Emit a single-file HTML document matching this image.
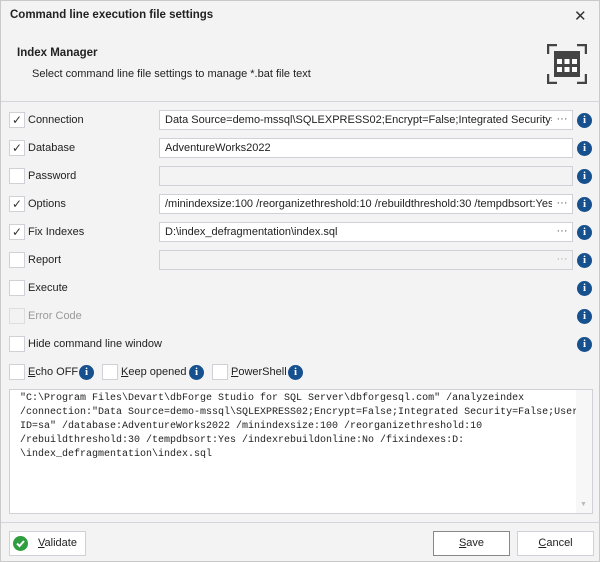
<!DOCTYPE html>
<html><head><style>
*{box-sizing:border-box;margin:0;padding:0}
body{width:600px;height:562px;background:#f3f3f3;font-family:"Liberation Sans",sans-serif;font-size:11px;color:#222;position:relative;overflow:hidden;border:1px solid #c9c9c9}
.a{position:absolute}
.title{left:9px;top:8px;font-weight:bold;font-size:11.5px}
.x{left:573px;top:6px;font-size:15px;color:#333}
.hdr{left:16px;top:46px;font-weight:bold;font-size:11.5px}
.sub{left:31px;top:67px;font-size:11px}
.sep{left:0;width:600px;height:1px;background:#d4d4dc}
.cb{width:16px;height:16px;border:1px solid #cfd0d8;background:#fff;font-size:12px;line-height:14px;text-align:center;color:#333}
.lbl{font-size:11px}
.inp{left:158px;width:414px;height:20px;border:1px solid #cfd0d8;background:#fff;padding:3px 5px;font-size:11px;white-space:nowrap;overflow:hidden}
.inp.dis{background:#f3f3f3}
.dots{position:absolute;right:0;top:0;height:18px;width:20px;text-align:center;color:#555;font-size:11px;line-height:16px;background:#fff}
.dis .dots{background:#f3f3f3;color:#aaa}
.info{width:15px;height:15px;border-radius:50%;background:#17508f;color:#fff;font-weight:bold;font-size:11px;line-height:15px;text-align:center;font-family:"Liberation Serif",serif}
.ta{left:8px;top:388px;width:584px;height:125px;border:1px solid #cfd0d8;background:#fff;font-family:"Liberation Mono",monospace;font-size:10px;line-height:14px;padding:2px 0 0 10px;white-space:pre;overflow:hidden}
.btn{height:25px;border:1px solid #cfd0d8;background:#fff;text-align:center;line-height:23px;font-size:11px}
u{text-decoration:underline}
</style></head><body>
<div class="a title">Command line execution file settings</div>
<div class="a x">✕</div>
<div class="a hdr">Index Manager</div>
<div class="a sub">Select command line file settings to manage *.bat file text</div>
<svg class="a" style="left:546px;top:43px" width="40" height="40" viewBox="0 0 40 40">
<path d="M1 10V1h9M30 1h9v9M39 30v9h-9M10 39H1v-9" stroke="#444" stroke-width="2.5" fill="none"/>
<rect x="7" y="7" width="26" height="26" fill="#444"/>
<g fill="#fff"><rect x="10" y="15" width="5" height="5"/><rect x="17.5" y="15" width="5" height="5"/><rect x="25" y="15" width="5" height="5"/><rect x="10" y="23" width="5" height="5"/><rect x="17.5" y="23" width="5" height="5"/><rect x="25" y="23" width="5" height="5"/></g>
</svg>
<div class="a sep" style="top:100px"></div>

<div class="a cb" style="left:8px;top:111px">✓</div><div class="a lbl" style="left:27px;top:113px">Connection</div>
<div class="a inp" style="top:109px">Data Source=demo-mssql\SQLEXPRESS02;Encrypt=False;Integrated Security=F<span class="dots">···</span></div>
<div class="a info" style="left:576px;top:112px">i</div>

<div class="a cb" style="left:8px;top:139px">✓</div><div class="a lbl" style="left:27px;top:141px">Database</div>
<div class="a inp" style="top:137px">AdventureWorks2022</div>
<div class="a info" style="left:576px;top:140px">i</div>

<div class="a cb" style="left:8px;top:167px"></div><div class="a lbl" style="left:27px;top:169px">Password</div>
<div class="a inp dis" style="top:165px"></div>
<div class="a info" style="left:576px;top:168px">i</div>

<div class="a cb" style="left:8px;top:195px">✓</div><div class="a lbl" style="left:27px;top:197px">Options</div>
<div class="a inp" style="top:193px">/minindexsize:100 /reorganizethreshold:10 /rebuildthreshold:30 /tempdbsort:Yes<span class="dots">···</span></div>
<div class="a info" style="left:576px;top:196px">i</div>

<div class="a cb" style="left:8px;top:223px">✓</div><div class="a lbl" style="left:27px;top:225px">Fix Indexes</div>
<div class="a inp" style="top:221px">D:\index_defragmentation\index.sql<span class="dots">···</span></div>
<div class="a info" style="left:576px;top:224px">i</div>

<div class="a cb" style="left:8px;top:251px"></div><div class="a lbl" style="left:27px;top:253px">Report</div>
<div class="a inp dis" style="top:249px"><span class="dots">···</span></div>
<div class="a info" style="left:576px;top:252px">i</div>

<div class="a cb" style="left:8px;top:279px"></div><div class="a lbl" style="left:27px;top:281px">Execute</div>
<div class="a info" style="left:576px;top:280px">i</div>

<div class="a cb" style="left:8px;top:307px;background:#f3f3f3;border-color:#ddd"></div><div class="a lbl" style="left:27px;top:309px;color:#999">Error Code</div>
<div class="a info" style="left:576px;top:308px">i</div>

<div class="a cb" style="left:8px;top:335px"></div><div class="a lbl" style="left:27px;top:337px">Hide command line window</div>
<div class="a info" style="left:576px;top:336px">i</div>

<div class="a cb" style="left:8px;top:363px"></div><div class="a lbl" style="left:27px;top:365px"><u>E</u>cho OFF</div>
<div class="a info" style="left:78px;top:364px">i</div>
<div class="a cb" style="left:101px;top:363px"></div><div class="a lbl" style="left:120px;top:365px"><u>K</u>eep opened</div>
<div class="a info" style="left:188px;top:364px">i</div>
<div class="a cb" style="left:211px;top:363px"></div><div class="a lbl" style="left:230px;top:365px"><u>P</u>owerShell</div>
<div class="a info" style="left:287px;top:364px">i</div>

<div class="a ta">"C:\Program Files\Devart\dbForge Studio for SQL Server\dbforgesql.com" /analyzeindex
/connection:"Data Source=demo-mssql\SQLEXPRESS02;Encrypt=False;Integrated Security=False;User
ID=sa" /database:AdventureWorks2022 /minindexsize:100 /reorganizethreshold:10
/rebuildthreshold:30 /tempdbsort:Yes /indexrebuildonline:No /fixindexes:D:
\index_defragmentation\index.sql</div>
<div class="a" style="left:575px;top:389px;width:16px;height:123px;background:#f7f7f7"></div>
<div class="a" style="left:579px;top:500px;font-size:7px;color:#bbb">▼</div>

<div class="a sep" style="top:521px"></div>
<div class="a btn" style="left:8px;top:530px;width:77px;text-align:left;padding-left:28px"><u>V</u>alidate</div>
<svg class="a" style="left:12px;top:535px" width="15" height="15" viewBox="0 0 15 15"><circle cx="7.5" cy="7.5" r="7.5" fill="#2e9e3e"/><path d="M4 7.5l2.5 2.5 4.5-5" stroke="#fff" stroke-width="2" fill="none"/></svg>
<div class="a btn" style="left:432px;top:530px;width:77px;border-color:#888"><u>S</u>ave</div>
<div class="a btn" style="left:516px;top:530px;width:77px"><u>C</u>ancel</div>
</body></html>
